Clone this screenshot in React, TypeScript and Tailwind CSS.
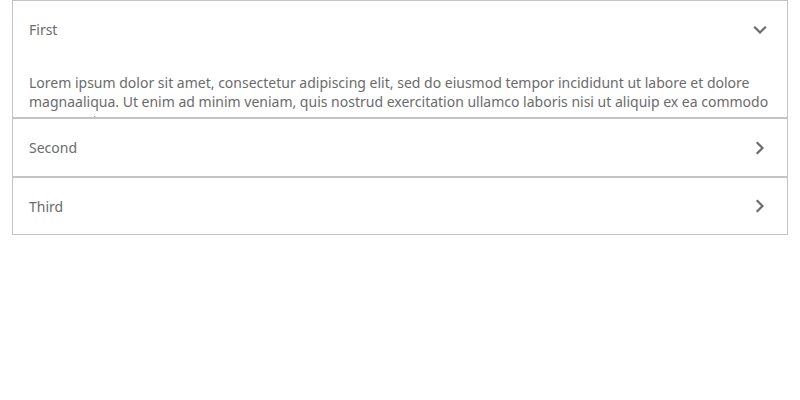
import React from "react";

const Down = () => (
  <svg width="20" height="20" viewBox="0 0 24 24" fill="none" stroke="#6b6b6b" strokeWidth="2.6" strokeLinecap="square" strokeLinejoin="miter">
    <path d="M6 9l6 6 6-6" />
  </svg>
);
const Right = () => (
  <svg width="20" height="20" viewBox="0 0 24 24" fill="none" stroke="#6b6b6b" strokeWidth="2.6" strokeLinecap="square" strokeLinejoin="miter">
    <path d="M9 6l6 6-6 6" />
  </svg>
);

export default function App() {
  return (
    <div className="w-[800px] h-[400px] bg-white pl-3 pr-3" style={{ fontFamily: '"Noto Sans", "Open Sans", sans-serif' }}>
      <div className="w-[776px] border border-[#c4c4c4] text-[#6b6b6b] text-[14px]">
        <div className="h-[116px] overflow-hidden">
          <div className="h-[57px] flex items-center justify-between pl-4 pr-[17px]">
            <span>First</span>
            <Down />
          </div>
          <div className="px-4 pt-[15px] leading-[19px]">
            Lorem ipsum dolor sit amet, consectetur adipiscing elit, sed do eiusmod tempor incididunt ut labore et dolore magnaaliqua. Ut enim ad minim veniam, quis nostrud exercitation ullamco laboris nisi ut aliquip ex ea commodo consequat.
          </div>
        </div>
        <div className="h-[59px] border-t-2 border-[#c4c4c4] flex items-center justify-between pl-4 pr-[17px]">
          <span>Second</span>
          <Right />
        </div>
        <div className="h-[58px] border-t-2 border-[#c4c4c4] flex items-center justify-between pl-4 pr-[17px]">
          <span>Third</span>
          <Right />
        </div>
      </div>
    </div>
  );
}
